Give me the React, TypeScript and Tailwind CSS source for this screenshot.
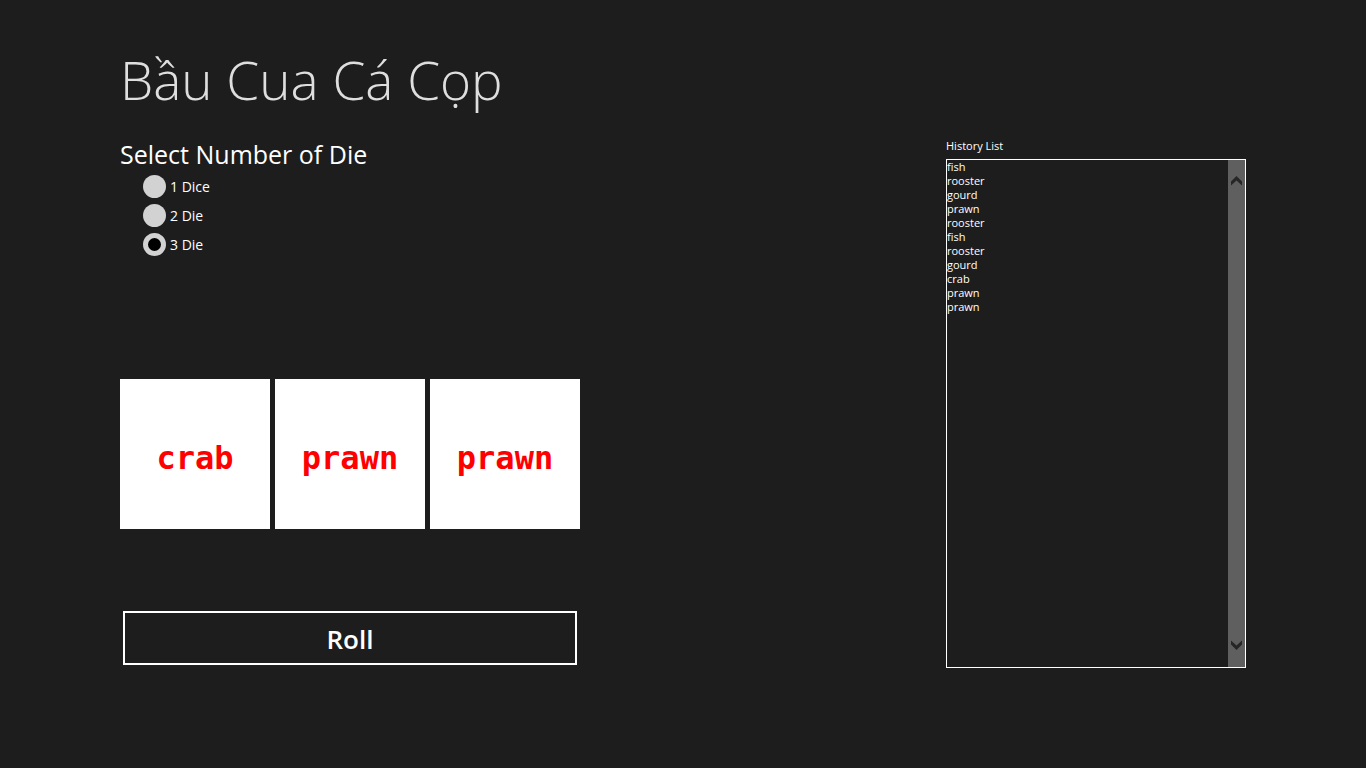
import { useRef, useState } from "react";

const FACES = ["gourd", "crab", "prawn", "fish", "rooster", "deer"];

const DICE_OPTIONS = [
  { count: 1, label: "1 Dice" },
  { count: 2, label: "2 Die" },
  { count: 3, label: "3 Die" },
];

const INITIAL_HISTORY = [
  "fish",
  "rooster",
  "gourd",
  "prawn",
  "rooster",
  "fish",
  "rooster",
  "gourd",
  "crab",
  "prawn",
  "prawn",
];

function Chevron({ down = false }: { down?: boolean }) {
  return (
    <svg viewBox="0 0 11 10" className="block h-[10px] w-[11px]" aria-hidden="true">
      <path
        d={down ? "M0 0.5V4.5L5.5 10L11 4.5V0.5L5.5 5.5Z" : "M0 9.5V5.5L5.5 0L11 5.5V9.5L5.5 4.5Z"}
        fill="#262626"
      />
    </svg>
  );
}

export default function App() {
  const [count, setCount] = useState(3);
  const [dice, setDice] = useState(["crab", "prawn", "prawn"]);
  const [history, setHistory] = useState(INITIAL_HISTORY);
  const listRef = useRef<HTMLUListElement>(null);

  const roll = () => {
    const next = Array.from({ length: count }, () => FACES[Math.floor(Math.random() * FACES.length)]);
    setDice(next);
    setHistory([...history, ...next]);
  };

  const scroll = (amount: number) => listRef.current?.scrollBy({ top: amount });

  return (
    <div className="flex min-h-screen flex-col bg-[#1d1d1d] px-[120px] pt-10 pb-[100px] font-['Open_Sans',sans-serif] text-white">
      <h1 className="h-[98px] text-[53px] leading-[80px] font-light text-[#dedede]">Bầu Cua Cá Cọp</h1>
      <div className="flex flex-1 items-stretch justify-between">
        <main className="flex w-[460px] flex-col">
          <fieldset>
            <legend className="h-[34px] text-[25px] leading-8">Select Number of Die</legend>
            <div className="flex flex-col gap-[6px] pt-[3px] pl-[23px]">
              {DICE_OPTIONS.map((option) => (
                <label key={option.count} className="flex h-[23px] items-center gap-1 text-sm">
                  <input
                    type="radio"
                    name="dice-count"
                    checked={count === option.count}
                    onChange={() => setCount(option.count)}
                    className="size-[23px] appearance-none rounded-full bg-[#d2d2d2] checked:border-[5px] checked:border-[#d2d2d2] checked:bg-black"
                  />
                  {option.label}
                </label>
              ))}
            </div>
          </fieldset>
          <div className="mt-auto flex gap-[5px]">
            {dice.map((face, index) => (
              <div
                key={index}
                className="flex size-[150px] items-center justify-center bg-white pt-2 font-['DejaVu_Sans_Mono',monospace] text-[32px] leading-10 font-bold text-[#ff0000]"
              >
                {face}
              </div>
            ))}
          </div>
          <button
            type="button"
            onClick={roll}
            className="mx-[3px] mt-[82px] mb-[3px] h-[54px] border-2 border-white pt-[2px] text-[26px] leading-9 font-semibold"
          >
            Roll
          </button>
        </main>
        <aside className="flex w-[300px] flex-col">
          <h2 className="h-[21px] text-[11px] leading-4">History List</h2>
          <div className="flex flex-1 border border-white">
            <ul ref={listRef} className="h-0 min-h-full flex-1 overflow-hidden text-[11px] leading-[14px]">
              {history.map((face, index) => (
                <li key={index}>{face}</li>
              ))}
            </ul>
            <div className="flex w-[17px] flex-col items-center justify-between bg-[#5f5f5f] pt-4 pb-[17px]">
              <button type="button" aria-label="Scroll up" onClick={() => scroll(-14)}>
                <Chevron />
              </button>
              <button type="button" aria-label="Scroll down" onClick={() => scroll(14)}>
                <Chevron down />
              </button>
            </div>
          </div>
        </aside>
      </div>
    </div>
  );
}
